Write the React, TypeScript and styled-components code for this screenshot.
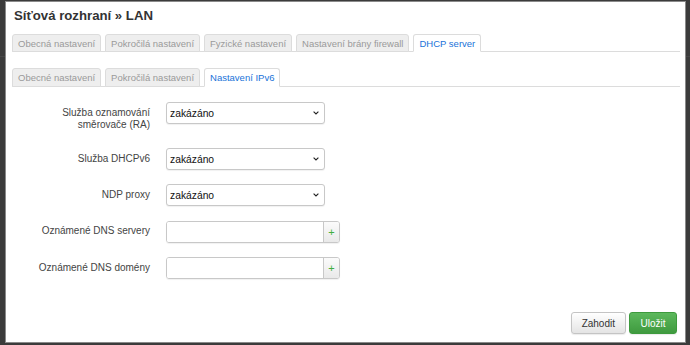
import React from 'react';
import styled, { createGlobalStyle } from 'styled-components';

const Global = createGlobalStyle`
  html, body { margin: 0; padding: 0; background: #3b3b3b; }
  body {
    font-family: "Liberation Sans", Arial, Helvetica, sans-serif;
    width: 690px;
    height: 345px;
    overflow: hidden;
  }
  * { box-sizing: border-box; }
`;

const Backdrop = styled.div`
  width: 690px;
  height: 345px;
  padding: 1px 4px 2px 5px;
  background:
    linear-gradient(to bottom, transparent 56px, #474747 56px, #474747 57px, transparent 57px),
    #3b3b3b;
`;

const Modal = styled.div`
  width: 681px;
  height: 342px;
  background: #fff;
  border: 1px solid #8a8a8a;
  padding: 6px 5px 0 6px;
  display: flex;
  flex-direction: column;
`;

const Title = styled.h3`
  margin: 0 0 10px 2px;
  font-size: 13.2px;
  line-height: 16px;
  font-weight: bold;
  color: #333;
`;

const TabBar = styled.div<{ $gap: number }>`
  display: flex;
  align-items: flex-end;
  border-bottom: 1px solid #dcdcdc;
  margin-bottom: ${p => p.$gap}px;
`;

const Tab = styled.div<{ $active?: boolean; $h: number }>`
  height: ${p => p.$h}px;
  margin-right: 4px;
  margin-bottom: -1px;
  padding: 0 5px;
  display: flex;
  align-items: center;
  font-size: 9.5px;
  white-space: nowrap;
  border: 1px solid #dcdcdc;
  border-bottom-color: ${p => (p.$active ? '#fff' : '#dcdcdc')};
  border-radius: 3px 3px 0 0;
  background: ${p => (p.$active ? '#fff' : '#eeeeee')};
  color: ${p => (p.$active ? '#1a73d9' : '#9a9a9a')};
`;

const Form = styled.div`
  display: grid;
  grid-template-columns: 154px 1fr;
  row-gap: 14px;
  align-items: start;
`;

const Label = styled.div`
  padding: 5px 16px 3px 0;
  text-align: right;
  font-size: 10px;
  line-height: 12px;
  color: #444;
`;

const Select = styled.div`
  width: 159px;
  height: 22px;
  border: 1px solid #c8c8c8;
  border-radius: 3px;
  background: #fff;
  box-shadow: 0 1px 1px rgba(0, 0, 0, 0.06);
  display: flex;
  align-items: center;
  justify-content: space-between;
  padding: 0 5px 0 3px;
  font-size: 10.3px;
  color: #111;
`;

const InputGroup = styled.div<{ $first?: boolean }>`
  width: 174px;
  height: 22px;
  margin-top: ${p => (p.$first ? 1 : 0)}px;
  display: flex;
  border: 1px solid #c8c8c8;
  border-radius: 3px;
  overflow: hidden;
  box-shadow: 0 1px 1px rgba(0, 0, 0, 0.06);
`;

const TextInput = styled.div`
  flex: 1;
  background: #fff;
`;

const AddButton = styled.div`
  width: 16px;
  border-left: 1px solid #c8c8c8;
  background: linear-gradient(#fbfbfb, #e9e9e9);
  color: #3fae3f;
  font-size: 11px;
  display: flex;
  align-items: center;
  justify-content: center;
`;

const Footer = styled.div`
  display: flex;
  justify-content: flex-end;
  gap: 3px;
  margin-top: 33px;
  padding-right: 3px;
`;

const Button = styled.div<{ $primary?: boolean }>`
  height: 22px;
  padding: 0 ${p => (p.$primary ? 10.5 : 10)}px;
  display: flex;
  align-items: center;
  font-size: 10px;
  border-radius: 3px;
  border: 1px solid ${p => (p.$primary ? '#3d9a3d' : '#c4c4c4')};
  background: ${p => (p.$primary ? 'linear-gradient(#5cb85c, #3f9a3f)' : 'linear-gradient(#ffffff, #e4e4e4)')};
  color: ${p => (p.$primary ? '#fff' : '#333')};
  box-shadow: 0 1px 1px rgba(0, 0, 0, 0.08);
`;

const Chevron = () => (
  <svg width="6" height="4" viewBox="0 0 6 4">
    <path d="M0.6 0.6 L3 3 L5.4 0.6" fill="none" stroke="#222" strokeWidth="1.1" />
  </svg>
);

const tabs1 = ['Obecná nastavení', 'Pokročilá nastavení', 'Fyzické nastavení', 'Nastavení brány firewall', 'DHCP server'];
const tabs2 = ['Obecné nastavení', 'Pokročilá nastavení', 'Nastavení IPv6'];

const rows: { label: React.ReactNode; kind: 'select' | 'input' }[] = [
  { label: <>Služba oznamování<br />směrovače (RA)</>, kind: 'select' },
  { label: 'Služba DHCPv6', kind: 'select' },
  { label: 'NDP proxy', kind: 'select' },
  { label: 'Oznámené DNS servery', kind: 'input' },
  { label: 'Oznámené DNS domény', kind: 'input' },
];

export default function App() {
  return (
    <>
      <Global />
      <Backdrop>
        <Modal>
          <Title>Síťová rozhraní » LAN</Title>
          <TabBar $gap={16}>
            {tabs1.map((t, i) => (
              <Tab key={t} $h={18} $active={i === tabs1.length - 1}>{t}</Tab>
            ))}
          </TabBar>
          <TabBar $gap={15}>
            {tabs2.map((t, i) => (
              <Tab key={t} $h={19} $active={i === tabs2.length - 1}>{t}</Tab>
            ))}
          </TabBar>
          <Form>
            {rows.map((r, i) => (
              <React.Fragment key={i}>
                <Label>{r.label}</Label>
                {r.kind === 'select' ? (
                  <Select>
                    <span>zakázáno</span>
                    <Chevron />
                  </Select>
                ) : (
                  <InputGroup $first={i === 3}>
                    <TextInput />
                    <AddButton>+</AddButton>
                  </InputGroup>
                )}
              </React.Fragment>
            ))}
          </Form>
          <Footer>
            <Button>Zahodit</Button>
            <Button $primary>Uložit</Button>
          </Footer>
        </Modal>
      </Backdrop>
    </>
  );
}
